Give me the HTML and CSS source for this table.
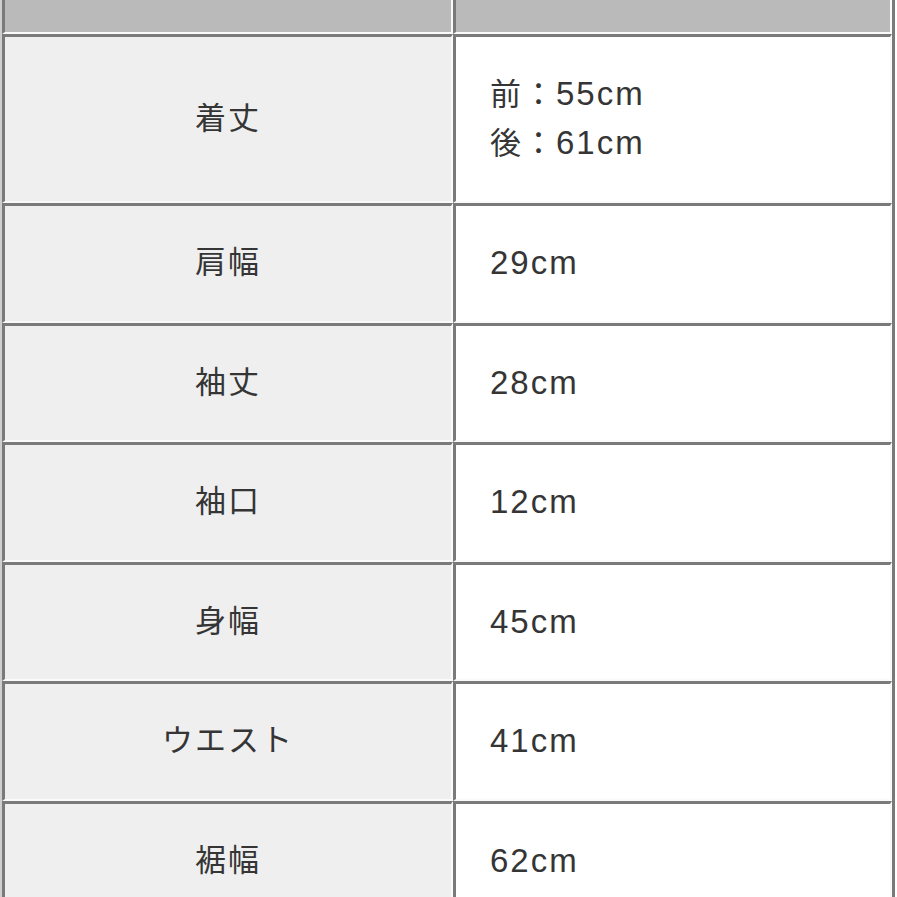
FILE: index.html
```html
<!DOCTYPE html>
<html lang="ja">
<head>
<meta charset="utf-8">
<link rel="stylesheet" href="styles.css">
</head>
<body>
<div class="sheet">
  <div class="cell head"></div>
  <div class="cell head"></div>

  <div class="cell label">着丈</div>
  <div class="cell value"><div>前：<span class="num">55cm</span></div><div>後：<span class="num">61cm</span></div></div>

  <div class="cell label">肩幅</div>
  <div class="cell value"><span class="num">29cm</span></div>

  <div class="cell label">袖丈</div>
  <div class="cell value"><span class="num">28cm</span></div>

  <div class="cell label">袖口</div>
  <div class="cell value"><span class="num">12cm</span></div>

  <div class="cell label">身幅</div>
  <div class="cell value"><span class="num">45cm</span></div>

  <div class="cell label">ウエスト</div>
  <div class="cell value"><span class="num">41cm</span></div>

  <div class="cell label">裾幅</div>
  <div class="cell value"><span class="num">62cm</span></div>

  <div class="cell label">&nbsp;</div>
  <div class="cell value">&nbsp;</div>
</div>
</body>
</html>
```

FILE: styles.css
```css
html, body {
  margin: 0;
  padding: 0;
  background: #ffffff;
  overflow: hidden;
}

body {
  font-family: "Liberation Sans", "Noto Sans CJK JP", sans-serif;
  color: #353535;
}

.sheet {
  width: 890px;
  display: grid;
  grid-template-columns: 451px 439px;
  grid-template-rows: 34px 169px repeat(7, 119.5px);
  border-left: 2px solid #cfcfcf;
  border-right: 3px solid #7a7a7a;
}

.cell {
  box-sizing: border-box;
  border-top: 3px solid #7a7a7a;
  border-left: 3px solid #7a7a7a;
  border-right: 2px solid #fafafa;
  border-bottom: 2px solid #fafafa;
  display: flex;
  flex-direction: column;
  justify-content: center;
  font-size: 31px;
  letter-spacing: 2px;
  line-height: 48px;
}

.head {
  background: #bababa;
  border-top: none;
}

.label {
  background: #efefef;
  align-items: center;
  text-align: center;
}

.value {
  background: #ffffff;
  align-items: flex-start;
  padding-left: 34px;
}

.num {
  font-size: 33px;
  letter-spacing: 2px;
}
```
